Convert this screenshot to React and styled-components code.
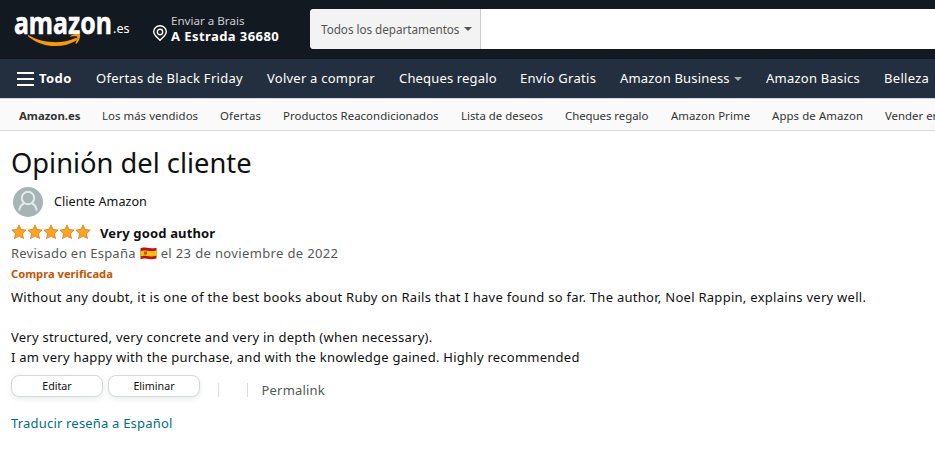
import React from 'react';
import styled, { createGlobalStyle } from 'styled-components';

const Global = createGlobalStyle`
  * { box-sizing: border-box; }
  body {
    margin: 0;
    overflow: hidden;
    background: #fff;
    color: #0f1111;
    font: 13px/20px "Noto Sans", sans-serif;
  }
`;

const Label = styled.span`
  white-space: pre;
  letter-spacing: ${(p) => p.$ls || 0}px;
`;

const Header = styled.header`
  height: 59px;
  background: #131921;
  color: #fff;
  display: flex;
  overflow: hidden;
`;

const Logo = styled.svg`
  flex: none;
  width: 152px;
  height: 59px;
`;

const Deliver = styled.div`
  flex: none;
  width: 158px;
  display: flex;
  padding-top: 13px;
`;

const Pin = styled.svg`
  width: 16px;
  height: 18px;
  margin: 11px 3px 0 0;
`;

const DeliverText = styled.div`
  display: flex;
  flex-direction: column;
  font-size: 11.6px;
  line-height: 15px;
  color: #ccc;
`;

const City = styled(Label)`
  font-size: 13px;
  font-weight: 700;
  line-height: 17px;
  color: #fff;
`;

const Search = styled.div`
  flex: 1;
  height: 40px;
  margin-top: 9px;
  display: flex;
  background: #fff;
  border-radius: 4px 0 0 4px;
  overflow: hidden;
`;

const Department = styled.div`
  width: 171px;
  padding: 0 8px 0 11px;
  display: flex;
  align-items: center;
  justify-content: space-between;
  background: #f3f3f3;
  border-right: 1px solid #cdcdcd;
  color: #555;
  font-size: 11.7px;
  line-height: 42px;
`;

const Caret = styled.i`
  display: inline-block;
  border: 4px solid transparent;
  border-top-color: ${(p) => p.$color};
  border-bottom: 0;
  margin-left: ${(p) => p.$gap || 0}px;
  vertical-align: ${(p) => p.$lift || 2}px;
`;

const Nav = styled.nav`
  height: 39px;
  background: #232f3e;
  color: #fff;
  display: grid;
  grid-template-columns: 79px 171px 132px 121px 100px 146px 118px 51px;
  padding-left: 17px;
  line-height: 39px;
  white-space: nowrap;
`;

const All = styled.div`
  display: flex;
  align-items: center;
  gap: 5px;
  font-weight: 700;
`;

const Bars = styled.span`
  width: 17px;
  height: 14px;
  border: solid #fff;
  border-width: 2px 0;
  display: flex;
  align-items: center;
  &::before {
    content: '';
    width: 17px;
    height: 2px;
    background: #fff;
  }
`;

const SubNav = styled.nav`
  height: 33px;
  background: #fafafa;
  border-top: 1px solid #d5d6d8;
  border-bottom: 1px solid #ddd;
  color: #333;
  display: grid;
  grid-template-columns: 83px 118px 63px 178px 104px 106px 101px 113px 50px;
  padding-left: 19px;
  font-size: 11.4px;
  line-height: 34px;
  white-space: nowrap;
  overflow: hidden;
`;

const Brand = styled(Label)`
  font-weight: 700;
`;

const Clipped = styled(Label)`
  overflow: hidden;
`;

const Main = styled.main`
  padding: 14px 11px 0;
`;

const Title = styled.h1`
  margin: 0;
  font-size: 27.3px;
  font-weight: 400;
  line-height: 36px;
`;

const Profile = styled.div`
  display: flex;
  align-items: center;
  gap: 11px;
  margin: 6px 0;
  padding-left: 2px;
  font-size: 12.6px;
  line-height: 22px;
`;

const Avatar = styled.svg`
  width: 30px;
  height: 30px;
`;

const Rating = styled.div`
  display: flex;
  height: 20px;
  font-weight: 700;
  line-height: 21px;
`;

const Stars = styled.svg`
  width: 80px;
  height: 16px;
  margin: 1px 9px 0 0;
`;

const Meta = styled.div`
  display: flex;
  color: #565959;
`;

const Flag = styled.svg`
  width: 17px;
  height: 13px;
  margin: 4px 4px 0;
`;

const Verified = styled.div`
  height: 20px;
  font-size: 11.2px;
  line-height: 22px;
  font-weight: 700;
  color: #c45500;
`;

const Review = styled.div`
  margin-top: 4px;
`;

const Line = styled.div`
  height: 20px;
  white-space: nowrap;
`;

const Actions = styled.div`
  display: flex;
  gap: 5px;
  margin-top: 8px;
  height: 28px;
`;

const Button = styled.button`
  width: 92px;
  height: 22px;
  padding: 0;
  border: 1px solid #d5d9d9;
  border-radius: 8px;
  background: #fff;
  box-shadow: 0 2px 5px rgba(213, 217, 217, 0.5);
  color: #0f1111;
  font: 10.7px/20px "Noto Sans", sans-serif;
`;

const Divider = styled.span`
  width: 1px;
  height: 14px;
  margin: 8px 0 0 ${(p) => p.$gap}px;
  background: #ddd;
`;

const Permalink = styled.a`
  margin: 5px 0 0 8.5px;
  color: #565959;
  letter-spacing: 0.2px;
`;

const Translate = styled.a`
  display: block;
  margin-top: 10px;
  color: #007185;
`;

const star = 'M8 .9 L10.1 5.5 L15.2 6.1 L11.4 9.5 L12.5 14.5 L8 12 L3.5 14.5 L4.6 9.5 L.8 6.1 L5.9 5.5 Z';

export default function App() {
  return (
    <>
      <Global />
      <Header>
        <Logo viewBox="0 0 152 59">
          <g transform="translate(14 34) scale(.828 1)">
            <text fontSize="30" fontWeight="700" fill="#fff" stroke="#fff" strokeWidth=".5" fontFamily="Noto Sans, sans-serif">amazon</text>
          </g>
          <text x="113" y="33" fontSize="12.6" fill="#fff" fontFamily="Noto Sans, sans-serif">.es</text>
          <path d="M28.6 35.2 C42 43 61 44.6 75 38.2 C77 37.5 78.3 39 76.8 40.2 C62 49.6 41 47.4 28 36.2 Q27.4 35 28.6 35.2Z" fill="#f90" />
          <path d="M70.6 36 C74 33.6 79.3 33.8 80 34.8 C80.6 36.2 79.5 41.2 76.3 43.8 C75.6 44.2 75.3 43.9 75.6 43.1 C76.7 40.5 77.8 37.8 77.1 36.9 C76.3 36 73.2 36.4 71 36.7 C70.2 36.8 70 36.4 70.6 36Z" fill="#f90" />
        </Logo>
        <Deliver>
          <Pin viewBox="0 0 16 18" fill="none" stroke="#fff" strokeWidth="1.4">
            <path d="M8 16.2 C5.5 13.6 1.7 11 1.7 7.7 C1.7 4.2 4.5 1.7 8 1.7 S14.3 4.2 14.3 7.7 C14.3 11 10.5 13.6 8 16.2Z" />
            <circle cx="8" cy="8" r="2.7" />
          </Pin>
          <DeliverText>
            <Label>Enviar a Brais</Label>
            <City $ls={0.43}>A Estrada 36680</City>
          </DeliverText>
        </Deliver>
        <Search>
          <Department>
            <Label $ls={-0.03}>Todos los departamentos</Label>
            <Caret $color="#555" />
          </Department>
        </Search>
      </Header>
      <Nav>
        <All><Bars /><Label $ls={0.45}>Todo</Label></All>
        <Label $ls={0.27}>Ofertas de Black Friday</Label>
        <Label $ls={0.24}>Volver a comprar</Label>
        <Label $ls={0.16}>Cheques regalo</Label>
        <Label $ls={0.3}>Envío Gratis</Label>
        <Label $ls={0.18}>Amazon Business<Caret $color="#a7acb2" $gap={4} /></Label>
        <Label $ls={0.24}>Amazon Basics</Label>
        <Label $ls={0.3}>Belleza</Label>
      </Nav>
      <SubNav>
        <Brand $ls={-0.03}>Amazon.es</Brand>
        <Label $ls={0.05}>Los más vendidos</Label>
        <Label $ls={0.18}>Ofertas</Label>
        <Label $ls={0.04}>Productos Reacondicionados</Label>
        <Label>Lista de deseos</Label>
        <Label $ls={-0.03}>Cheques regalo</Label>
        <Label $ls={0.08}>Amazon Prime</Label>
        <Label $ls={0.1}>Apps de Amazon</Label>
        <Clipped>Vender en</Clipped>
      </SubNav>
      <Main>
        <Title>Opinión del cliente</Title>
        <Profile>
          <Avatar viewBox="0 0 30 30">
            <circle cx="15" cy="15" r="15" fill="#a6b4b4" />
            <g fill="none" stroke="#e6eaea" strokeWidth="2">
              <circle cx="15" cy="11" r="6.2" />
              <path d="M6.2 23.5 C6.8 19.5 8.6 17.2 11.4 16.2 M18.6 16.2 C21.4 17.2 23.2 19.5 23.8 23.5" />
            </g>
          </Avatar>
          <Label $ls={0.03}>Cliente Amazon</Label>
        </Profile>
        <Rating>
          <Stars viewBox="0 0 80 16">
            {[0, 16, 32, 48, 64].map((x) => (
              <path key={x} d={star} transform={`translate(${x} 0)`} fill="#ffa41c" stroke="#de7921" strokeWidth=".8" />
            ))}
          </Stars>
          <Label $ls={0.15}>Very good author</Label>
        </Rating>
        <Meta>
          <Label $ls={0.22}>Revisado en España</Label>
          <Flag viewBox="0 0 17 13">
            <path d="M.5 1.2 C5 -.6 8 2.4 16.5 .8 V11.6 C8 13.4 5 10.4 .5 12.2Z" fill="#c60b1e" />
            <path d="M.5 4 C5 2.2 8 5.2 16.5 3.6 V8.8 C8 10.6 5 7.6 .5 9.4Z" fill="#ffc400" />
            <path d="M4 4.6 h3 v2.4 q-1.5 2 -3 0Z" fill="#b5562a" />
          </Flag>
          <Label $ls={0.36}>el 23 de noviembre de 2022</Label>
        </Meta>
        <Verified>Compra verificada</Verified>
        <Review>
          <Line><Label $ls={0.28}>Without any doubt, it is one of the best books about Ruby on Rails that I have found so far. The author, Noel Rappin, explains very well.</Label></Line>
          <Line />
          <Line><Label $ls={0.24}>Very structured, very concrete and very in depth (when necessary).</Label></Line>
          <Line><Label $ls={0.245}>I am very happy with the purchase, and with the knowledge gained. Highly recommended</Label></Line>
        </Review>
        <Actions>
          <Button>Editar</Button>
          <Button>Eliminar</Button>
          <Divider $gap={13} />
          <Divider $gap={23} />
          <Permalink>Permalink</Permalink>
        </Actions>
        <Translate><Label $ls={0.19}>Traducir reseña a Español</Label></Translate>
      </Main>
    </>
  );
}
